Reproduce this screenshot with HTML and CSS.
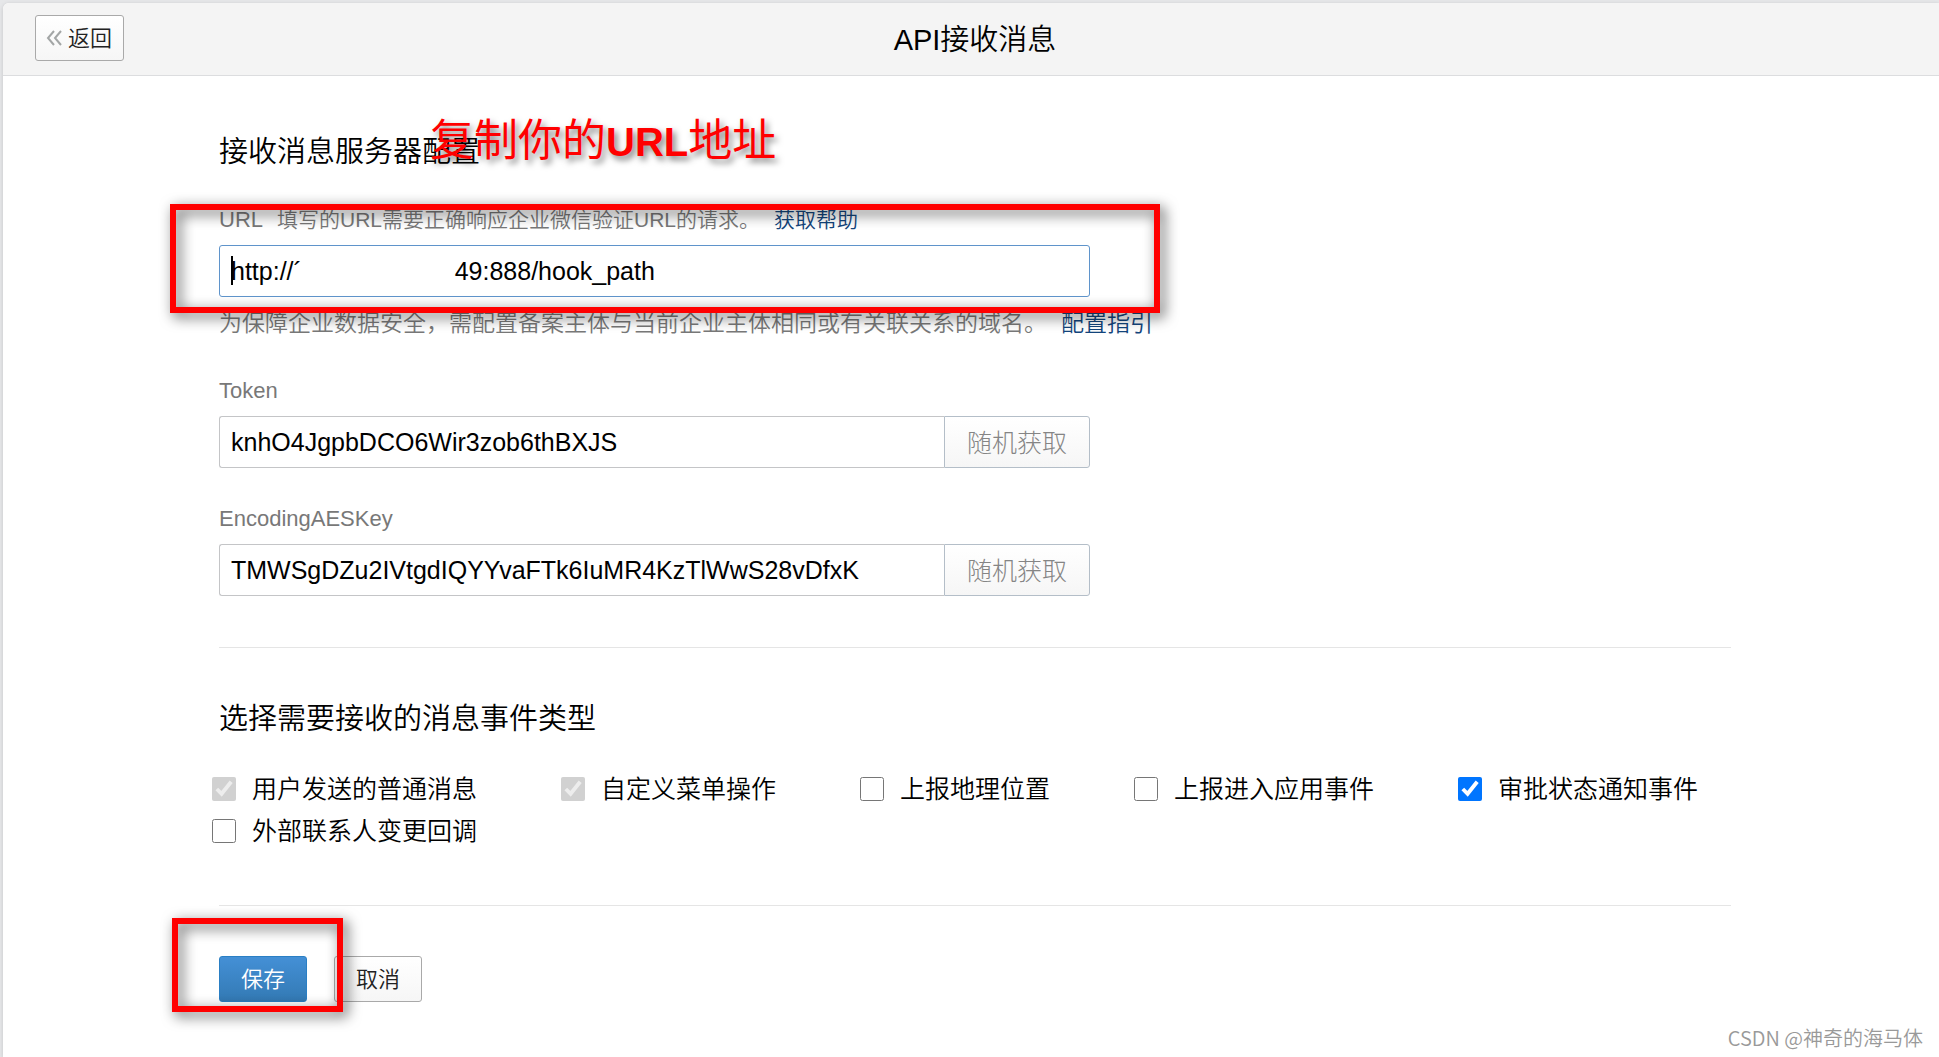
FILE: index.html
```html
<!DOCTYPE html>
<html lang="zh-CN">
<head>
  <meta charset="UTF-8">
  <title>API接收消息</title>
  <link rel="stylesheet" href="styles.css">
</head>
<body>
  <div class="page">
    <header class="header">
      <button type="button" class="btn btn-back">
        <svg class="back-icon" viewBox="0 0 16 16" width="16" height="16" fill="none" stroke="#a3a6a6" stroke-width="2"><path d="M8 1L2 8l6 7M15 1L9 8l6 7"/></svg>
        返回
      </button>
      <h1>API接收消息</h1>
    </header>

    <main class="content">
      <form>
        <div class="title-wrap">
          <h2>接收消息服务器配置</h2>
          <div class="note-text">复制你的<span>URL</span>地址</div>
        </div>

        <div class="field url-field">
          <div class="label-row">
            <label for="url">URL</label>
            <span class="desc">填写的URL需要正确响应企业微信验证URL的请求。<a href="#">获取帮助</a></span>
          </div>
          <div class="input-wrap">
            <input type="text" id="url" class="input active" value="http://´&nbsp;&nbsp;&nbsp;&nbsp;&nbsp;&nbsp;&nbsp;&nbsp;&nbsp;&nbsp;&nbsp;&nbsp;&nbsp;&nbsp;&nbsp;&nbsp;&nbsp;&nbsp;&nbsp;&nbsp;&nbsp;&nbsp;49:888/hook_path">
            <span class="caret"></span>
          </div>
          <p class="hint">为保障企业数据安全，需配置备案主体与当前企业主体相同或有关联关系的域名。<a href="#">配置指引</a></p>
          <div class="mark mark-url"></div>
        </div>

        <div class="field">
          <div class="label-row"><label for="token">Token</label></div>
          <div class="input-group">
            <input type="text" id="token" class="input" value="knhO4JgpbDCO6Wir3zob6thBXJS">
            <button type="button" class="btn-random">随机获取</button>
          </div>
        </div>

        <div class="field">
          <div class="label-row"><label for="aeskey">EncodingAESKey</label></div>
          <div class="input-group">
            <input type="text" id="aeskey" class="input" value="TMWSgDZu2IVtgdIQYYvaFTk6IuMR4KzTlWwS28vDfxK">
            <button type="button" class="btn-random">随机获取</button>
          </div>
        </div>

        <hr>

        <h2>选择需要接收的消息事件类型</h2>
        <div class="events">
          <label><input type="checkbox" checked disabled>用户发送的普通消息</label>
          <label><input type="checkbox" checked disabled>自定义菜单操作</label>
          <label><input type="checkbox">上报地理位置</label>
          <label><input type="checkbox">上报进入应用事件</label>
          <label><input type="checkbox" checked>审批状态通知事件</label>
          <label><input type="checkbox">外部联系人变更回调</label>
        </div>

        <hr>

        <div class="actions">
          <button type="submit" class="btn btn-save">保存</button>
          <button type="button" class="btn">取消</button>
          <div class="mark mark-save"></div>
        </div>
      </form>
    </main>

    <div class="watermark">CSDN @神奇的海马体</div>
  </div>
</body>
</html>
```
FILE: styles.css
```css
* {
  box-sizing: border-box;
}

body {
  margin: 0;
  padding: 3px 0 0 3px;
  background: #e6e7e9;
  color: #000;
  font-family: "Liberation Sans", "Noto Sans CJK SC", sans-serif;
  font-weight: 350;
}

.page {
  position: relative;
  min-height: calc(100vh - 3px);
  background: #fff;
  border-radius: 6px 0 0 0;
  box-shadow: 0 1px 4px rgba(0, 0, 0, 0.15);
}

/* top bar */
.header {
  display: grid;
  grid-template-columns: 1fr auto 1fr;
  align-items: center;
  height: 73px;
  padding: 0 24px 0 32px;
  background: #f4f4f4;
  border-bottom: 1px solid #dcdddf;
  border-radius: 6px 0 0 0;
}

h1,
h2 {
  margin: 0;
  font-size: 29px;
  font-weight: 350;
  line-height: 42px;
}

h1 {
  padding-top: 2px;
}

.btn {
  height: 46px;
  min-width: 88px;
  padding: 0 21px 4px;
  border: 1px solid #a9a9a9;
  border-radius: 3px;
  background: linear-gradient(#fff, #f6f6f6);
  color: #222;
  font: inherit;
  font-size: 22px;
  cursor: pointer;
}

.btn-back {
  display: flex;
  align-items: center;
  justify-self: start;
  gap: 6px;
  margin-bottom: 2px;
  padding: 0 11px 4px 10px;
}

.back-icon {
  margin-top: 4px;
}

.content {
  padding: 55px 208px 50px 216px;
}

.title-wrap {
  position: relative;
  margin-bottom: 32px;
}

.field {
  position: relative;
  width: 871px;
  max-width: 100%;
  margin-bottom: 36px;
}

.label-row {
  display: flex;
  gap: 14px;
  margin-bottom: 10px;
  color: #787878;
  font-size: 22px;
  line-height: 30px;
  white-space: nowrap;
}

.desc {
  font-size: 21px;
}

a {
  color: #13457c;
  text-decoration: none;
}

.desc a,
.hint a {
  margin-left: 14px;
}

.input-wrap {
  position: relative;
}

.input {
  display: block;
  width: 100%;
  height: 52px;
  padding: 0 11px;
  border: 1px solid #c4c5c7;
  border-radius: 3px;
  background: #fff;
  color: #000;
  font: inherit;
  font-size: 25px;
  outline: none;
}

.input.active {
  border-color: #5f94cb;
}

.caret {
  position: absolute;
  top: 11px;
  left: 12px;
  width: 2px;
  height: 29px;
  background: #000;
}

.hint {
  margin: 10px 0 37px;
  color: #787878;
  font-size: 23px;
  line-height: 32px;
  white-space: nowrap;
}

.input-group {
  display: flex;
}

.input-group .input {
  flex: 1;
  border-right: 0;
  border-radius: 3px 0 0 3px;
}

.btn-random {
  width: 146px;
  height: 52px;
  padding: 0 0 3px;
  border: 1px solid #b4bec8;
  border-radius: 0 3px 3px 0;
  background: linear-gradient(#fff, #f6f6f6);
  color: #858585;
  font: inherit;
  font-size: 25px;
  font-weight: 300;
  cursor: pointer;
}

hr {
  height: 1px;
  margin: 51px 0 50px;
  border: 0;
  background: #e5e5e5;
}

/* event types */
.events {
  display: flex;
  flex-wrap: wrap;
  column-gap: 84px;
  margin: 28px 0 53px -7px;
  font-size: 25px;
  line-height: 42px;
}

.events label {
  display: flex;
  align-items: center;
  gap: 16px;
}

.events input {
  width: 24px;
  height: 24px;
  margin: 0;
}

.actions {
  position: relative;
  display: flex;
  gap: 27px;
}

.btn-save {
  border-color: #2a7fc4;
  background: linear-gradient(#4490d6, #337ab4);
  color: #fff;
}

/* red annotations */
.note-text {
  position: absolute;
  top: -22px;
  left: 211px;
  color: #f00;
  font-size: 44px;
  font-weight: 400;
  line-height: 64px;
  text-shadow: 3px 4px 6px rgba(0, 0, 0, 0.5);
  white-space: nowrap;
}

.note-text span {
  font-size: 40px;
  font-weight: 700;
}

.mark {
  position: absolute;
  border: 6px solid #f00;
  filter: drop-shadow(4px 4px 7px rgba(0, 0, 0, 0.7));
  pointer-events: none;
}

.mark-url {
  top: -1px;
  left: -49px;
  width: 990px;
  height: 109px;
}

.mark-save {
  top: -38px;
  left: -47px;
  width: 171px;
  height: 94px;
}

.watermark {
  position: absolute;
  right: 16px;
  bottom: 5px;
  color: #999;
  font-family: "Noto Sans CJK SC", sans-serif;
  font-size: 20px;
  line-height: 28px;
}
```
